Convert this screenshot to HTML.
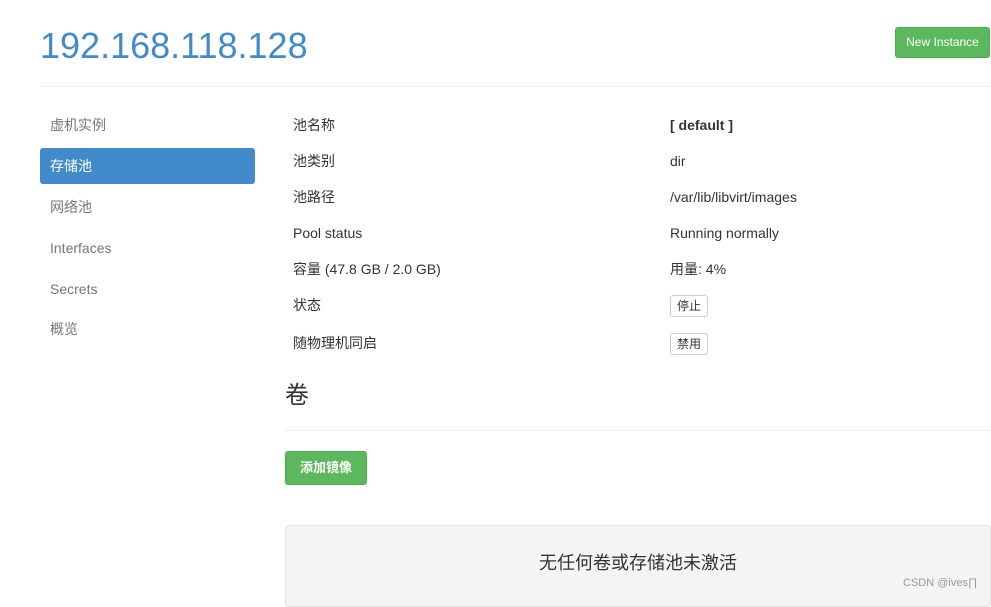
<!DOCTYPE html>
<html><head><meta charset="utf-8"><style>
body{margin:0;width:991px;height:595px;overflow:hidden;background:#fff;font-family:"Liberation Sans","Noto Sans CJK SC",sans-serif;font-size:14px;color:#333;position:relative;line-height:16px}
.a{position:absolute;white-space:nowrap}
h1{position:absolute;left:40px;top:24px;margin:0;font-weight:normal;font-size:36px;color:#428bca;line-height:44px}
.btn{position:absolute;background:#5cb85c;color:#fff;border:1px solid #4cae4c;border-radius:3px;font-size:12px;text-align:center}
.hr{position:absolute;height:1px;background:#eee}
.nav{position:absolute;left:50px;color:#777;font-size:14px}
.sb{position:absolute;left:670px;border:1px solid #ccc;border-radius:3px;font-size:12px;padding:0 6px;height:20px;line-height:20px;background:#fff}
</style></head><body>
<h1>192.168.118.128</h1>
<div class="btn" style="left:895px;top:27px;width:93px;height:29px;line-height:29px">New Instance</div>
<div class="hr" style="left:40px;top:86px;width:951px"></div>
<div class="nav" style="top:117px">虚机实例</div>
<div class="a" style="left:40px;top:148px;width:215px;height:36px;background:#428bca;border-radius:3px"></div>
<div class="nav" style="top:158px;color:#fff">存储池</div>
<div class="nav" style="top:199px">网络池</div>
<div class="nav" style="top:240px">Interfaces</div>
<div class="nav" style="top:281px">Secrets</div>
<div class="nav" style="top:321px">概览</div>
<div class="a" style="left:293px;top:117px">池名称</div>
<div class="a" style="left:293px;top:153px">池类别</div>
<div class="a" style="left:293px;top:189px">池路径</div>
<div class="a" style="left:293px;top:225px">Pool status</div>
<div class="a" style="left:293px;top:261px">容量 (47.8 GB / 2.0 GB)</div>
<div class="a" style="left:293px;top:297px">状态</div>
<div class="a" style="left:293px;top:335px">随物理机同启</div>
<div class="a" style="left:670px;top:117px;font-weight:bold">[ default ]</div>
<div class="a" style="left:670px;top:153px">dir</div>
<div class="a" style="left:670px;top:189px">/var/lib/libvirt/images</div>
<div class="a" style="left:670px;top:225px">Running normally</div>
<div class="a" style="left:670px;top:261px">用量: 4%</div>
<div class="sb" style="top:295px">停止</div>
<div class="sb" style="top:333px">禁用</div>
<div class="a" style="left:285px;top:382px;font-size:24px;line-height:28px">卷</div>
<div class="hr" style="left:285px;top:430px;width:706px"></div>
<div class="btn" style="left:285px;top:451px;width:80px;height:32px;line-height:32px;font-size:13px;font-weight:bold">添加镜像</div>
<div class="a" style="left:285px;top:525px;width:704px;height:80px;background:#f4f4f4;border:1px solid #e3e3e3;border-radius:4px"></div>
<div class="a" style="left:285px;top:553px;width:706px;text-align:center;font-size:18px;line-height:20px">无任何卷或存储池未激活</div>
<div class="a" style="left:903px;top:575px;font-size:11px;color:#999">CSDN @ives∏</div>
</body></html>
